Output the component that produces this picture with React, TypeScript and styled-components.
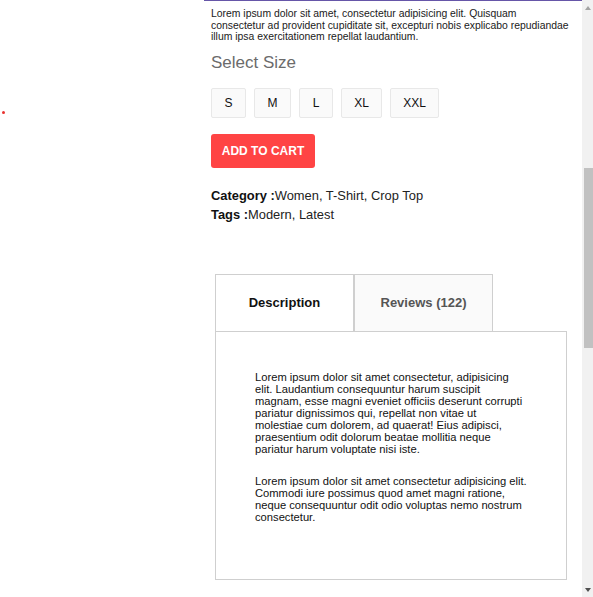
import React, { useState } from "react";
import styled, { createGlobalStyle } from "styled-components";

const Global = createGlobalStyle`
  html, body { margin: 0; padding: 0; background: #fff; }
  body { font-family: "Liberation Sans", Arial, sans-serif; color: #111; overflow: hidden; }
  * { box-sizing: border-box; }
`;

const Page = styled.div`
  display: flex;
  width: 593px;
  height: 597px;
  overflow: hidden;
`;

const Side = styled.aside`
  width: 204px;
  flex: none;
  padding: 111px 0 0 2px;
`;

const Dot = styled.span`
  display: block;
  width: 3px;
  height: 3px;
  border-radius: 50%;
  background: #e8322f;
`;

const Main = styled.main`
  flex: 1;
  min-width: 0;
  border-top: 1px solid #6656a8;
  padding: 7px 11px 0 7px;
`;

const Intro = styled.p`
  margin: 0;
  font-size: 10.4px;
  line-height: 11.5px;
  color: #1a1a1a;
`;

const SizeTitle = styled.h4`
  margin: 10px 0 0;
  font-size: 17px;
  line-height: 20px;
  font-weight: normal;
  color: #6b6b6b;
`;

const Sizes = styled.div`
  display: flex;
  gap: 8px;
  margin-top: 15px;
`;

const SizeButton = styled.button<{ $w: number }>`
  width: ${(p) => p.$w}px;
  height: 30px;
  padding: 0;
  border: 1px solid #e8e8e8;
  border-radius: 2px;
  background: #fafafa;
  font-family: "Liberation Sans", Arial, sans-serif;
  font-size: 12px;
  color: #111;
`;

const CartButton = styled.button`
  margin-top: 16px;
  height: 34px;
  width: 104px;
  padding: 0;
  border: none;
  border-radius: 3px;
  background: #ff4444;
  color: #fff;
  font-family: "Liberation Sans", Arial, sans-serif;
  font-weight: bold;
  font-size: 12px;
`;

const Meta = styled.div`
  margin-top: 18px;
  font-size: 12.9px;
  line-height: 19px;
  color: #222;
`;

const MetaLabel = styled.b`
  color: #111;
`;

const TabsArea = styled.section`
  margin: 50px 0 0 4px;
  width: 352px;
`;

const TabRow = styled.div`
  display: flex;
`;

const Tab = styled.button<{ $active: boolean }>`
  width: 139px;
  height: 57px;
  padding: 0;
  border: 1px solid #cfcfcf;
  border-bottom: none;
  background: ${(p) => (p.$active ? "#fff" : "#fafafa")};
  color: ${(p) => (p.$active ? "#111" : "#555")};
  font-family: "Liberation Sans", Arial, sans-serif;
  font-weight: bold;
  font-size: 13px;
`;

const Panel = styled.div`
  border: 1px solid #cfcfcf;
  height: 249px;
  padding: 39px 38.7px 0 39px;
`;

const PanelText = styled.p`
  margin: 0 0 20px;
  font-size: 11.2px;
  line-height: 12px;
  color: #111;
`;

const ScrollTrack = styled.div`
  width: 11px;
  flex: none;
  background: #f1f1f1;
  display: flex;
  flex-direction: column;
  align-items: flex-end;
`;

const Arrow = styled.span<{ $down?: boolean }>`
  display: block;
  width: 0;
  height: 0;
  margin: ${(p) => (p.$down ? "auto 2px 5px 0" : "6px 2px 0 0")};
  border-left: 3.5px solid transparent;
  border-right: 3.5px solid transparent;
  ${(p) =>
    p.$down
      ? "border-top: 4px solid #505050;"
      : "border-bottom: 4px solid #a3a3a3;"}
`;

const Thumb = styled.div`
  width: 9px;
  height: 180px;
  margin-top: 158px;
  background: #c1c1c1;
`;

const sizes: [string, number][] = [
  ["S", 35],
  ["M", 37],
  ["L", 34],
  ["XL", 41],
  ["XXL", 49],
];

export default function App() {
  const [tab, setTab] = useState(0);
  return (
    <>
      <Global />
      <Page>
        <Side>
          <Dot />
        </Side>
        <Main>
          <Intro>
            Lorem ipsum dolor sit amet, consectetur adipisicing elit. Quisquam
            consectetur ad provident cupiditate sit, excepturi nobis explicabo
            repudiandae illum ipsa exercitationem repellat laudantium.
          </Intro>
          <SizeTitle>Select Size</SizeTitle>
          <Sizes>
            {sizes.map(([s, w]) => (
              <SizeButton key={s} $w={w}>
                {s}
              </SizeButton>
            ))}
          </Sizes>
          <CartButton>ADD TO CART</CartButton>
          <Meta>
            <div>
              <MetaLabel>Category :</MetaLabel>Women, T-Shirt, Crop Top
            </div>
            <div>
              <MetaLabel>Tags :</MetaLabel>Modern, Latest
            </div>
          </Meta>
          <TabsArea>
            <TabRow>
              <Tab $active={tab === 0} onClick={() => setTab(0)}>
                Description
              </Tab>
              <Tab $active={tab === 1} onClick={() => setTab(1)}>
                Reviews (122)
              </Tab>
            </TabRow>
            <Panel>
              <PanelText>
                Lorem ipsum dolor sit amet consectetur, adipisicing elit.
                Laudantium consequuntur harum suscipit magnam, esse magni
                eveniet officiis deserunt corrupti pariatur dignissimos qui,
                repellat non vitae ut molestiae cum dolorem, ad quaerat! Eius
                adipisci, praesentium odit dolorum beatae mollitia neque
                pariatur harum voluptate nisi iste.
              </PanelText>
              <PanelText>
                Lorem ipsum dolor sit amet consectetur adipisicing elit.
                Commodi iure possimus quod amet magni ratione, neque
                consequuntur odit odio voluptas nemo nostrum consectetur.
              </PanelText>
            </Panel>
          </TabsArea>
        </Main>
        <ScrollTrack>
          <Arrow />
          <Thumb />
          <Arrow $down />
        </ScrollTrack>
      </Page>
    </>
  );
}
